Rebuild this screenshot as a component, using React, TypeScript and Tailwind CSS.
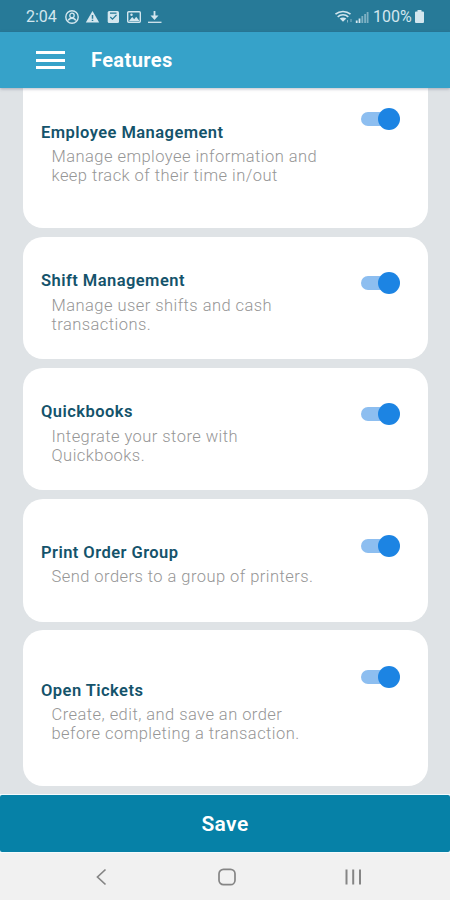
const features = [
  {
    title: "Employee Management",
    lines: ["Manage employee information and", "keep track of their time in/out"],
    card: "h-[140px] rounded-b-[20px] pt-[35px]",
    text: "mt-[5px]",
    toggle: "mt-[-15px]",
  },
  {
    title: "Shift Management",
    lines: ["Manage user shifts and cash", "transactions."],
    card: "mt-[9px] h-[122px] rounded-[20px] pt-[34px]",
    text: "mt-[6px]",
    toggle: "mt-px",
  },
  {
    title: "Quickbooks",
    lines: ["Integrate your store with", "Quickbooks."],
    card: "mt-[9px] h-[122px] rounded-[20px] pt-[34px]",
    text: "mt-[6px]",
    toggle: "mt-px",
  },
  {
    title: "Print Order Group",
    lines: ["Send orders to a group of printers."],
    card: "mt-[9px] h-[123px] rounded-[20px] pt-[44px]",
    text: "mt-[5px]",
    toggle: "mt-[-8.5px]",
  },
  {
    title: "Open Tickets",
    lines: ["Create, edit, and save an order", "before completing a transaction."],
    card: "mt-[8px] h-[156px] rounded-[20px] pt-[51px]",
    text: "mt-[5px]",
    toggle: "mt-[-15.5px]",
  },
];

function StatusBar() {
  return (
    <div className="flex h-8 shrink-0 items-center bg-[#277a98] pt-px text-[#d3e6ee]">
      <span className="ml-[26px] w-[38px] text-[16px] leading-none">2:04</span>
      <svg width="100" height="16" viewBox="0 0 100 16" fill="none">
        <circle cx="8" cy="8" r="6.2" stroke="currentColor" strokeWidth="1.4" />
        <circle cx="8" cy="6.4" r="2.2" stroke="currentColor" strokeWidth="1.3" />
        <path d="M4.3 11.5c1-3 6.4-3 7.4 0" stroke="currentColor" strokeWidth="1.4" />
        <path d="M28.5 2 35.2 13.5H21.8Z" fill="currentColor" />
        <path d="M28.5 6v3.7M28.5 10.7v1.4" stroke="#277a98" strokeWidth="1.5" />
        <rect x="43.7" y="2" width="11.3" height="12" rx="1.5" fill="currentColor" />
        <path d="m46.3 8 2.2 2.2 4-4.2M46 4.2h6.5" stroke="#277a98" strokeWidth="1.2" />
        <rect x="63.7" y="2.7" width="12.6" height="10.6" rx="1" stroke="currentColor" strokeWidth="1.4" />
        <path d="m65 12 3.2-4 2 2.3 2-2.5L75.5 12Z" fill="currentColor" />
        <circle cx="67.5" cy="5.8" r="1.2" fill="currentColor" />
        <path d="M90.5 2v7" stroke="currentColor" strokeWidth="1.8" />
        <path d="M86.5 6.5h8l-4 4.5Z" fill="currentColor" />
        <path d="M84 13.3h13.5" stroke="currentColor" strokeWidth="1.3" />
      </svg>
      <svg className="ml-auto" width="36" height="16" viewBox="0 0 36 16" fill="none">
        <path d="M.5 5.200c4.200-3.700 10.800-3.700 15 0" stroke="currentColor" strokeWidth="1.6" />
        <path d="M2.700 7.800c3-2.700 7.600-2.700 10.600 0" stroke="currentColor" strokeWidth="1.6" />
        <path d="M8 12.800 4.700 9.600c1.900-1.600 4.700-1.600 6.600 0Z" fill="currentColor" />
        <path d="M12.500 11v2.500M16 10v3" stroke="currentColor" strokeOpacity=".55" />
        <path d="M21.700 11.500V14M24.500 9.500V14" stroke="currentColor" strokeWidth="1.800" />
        <path d="M27.300 7v7M30.100 5v9M32.600 3v11" stroke="currentColor" strokeOpacity=".5" strokeWidth="1.800" />
      </svg>
      <span className="ml-[2px] w-[42px] text-[16px] leading-none">100%</span>
      <svg className="mr-[26px]" width="9" height="13" viewBox="0 0 9 13" fill="currentColor">
        <path d="M2.5 0h4v1.5H8q1 0 1 1V12q0 1-1 1H1q-1 0-1-1V2.5q0-1 1-1h1.5Z" />
      </svg>
    </div>
  );
}

function Toggle({ className }: { className: string }) {
  return (
    <div className={`flex h-[22px] w-[39px] shrink-0 items-center ${className}`}>
      <div className="h-[14px] w-[28px] rounded-full bg-[#8dbef0]" />
      <div className="-ml-[11px] size-[22px] shrink-0 rounded-full bg-[#1c84e3]" />
    </div>
  );
}

export default function App() {
  return (
    <div className="flex h-[900px] w-[450px] flex-col overflow-hidden bg-[#dfe3e6] font-['Roboto',sans-serif]">
      <StatusBar />
      <header className="z-10 flex h-14 shrink-0 items-center bg-[#36a2c9] shadow-[0_1px_3px_rgba(60,60,90,0.35)]">
        <div className="ml-9 flex w-[29px] flex-col gap-[4.5px]">
          <span className="h-[3px] bg-white" />
          <span className="h-[3px] bg-white" />
          <span className="h-[3px] bg-white" />
        </div>
        <h1 className="ml-[26px] text-[20px] leading-none font-bold tracking-[0.4px] text-white">Features</h1>
      </header>

      <main className="h-[706px] shrink-0 pr-[22px] pl-[23px]">
        {features.map((f) => (
          <section key={f.title} className={`flex justify-between bg-white pr-[28px] pl-[18px] ${f.card}`}>
            <div className="whitespace-nowrap">
              <h2 className="text-[16.5px] leading-[19px] font-semibold tracking-[0.45px] text-[#14536b]">{f.title}</h2>
              <p className={`ml-[10.5px] text-[16.5px] leading-[19px] font-light tracking-[0.45px] text-[#969696] ${f.text}`}>
                {f.lines.map((line) => (
                  <span key={line} className="block">
                    {line}
                  </span>
                ))}
              </p>
            </div>
            <Toggle className={f.toggle} />
          </section>
        ))}
      </main>

      <div className="h-[59px] shrink-0 border-t border-b-2 border-[#f4fbfd] bg-[#f4fbfd]">
        <button className="h-[57px] w-full rounded-[2px] bg-[#0681a7] pt-[2px] text-[21px] font-semibold tracking-[0.4px] text-white">
          Save
        </button>
      </div>
      <nav className="flex flex-1 items-center bg-[#f1f1f1]">
        <svg className="ml-[94px]" width="14" height="18" viewBox="0 0 14 18" fill="none" stroke="#858585" strokeWidth="1.7">
          <path d="M11.5 1.5 3.5 9l8 7.5" />
        </svg>
        <svg className="ml-[110px]" width="18" height="18" viewBox="0 0 18 18" fill="none" stroke="#858585" strokeWidth="1.7">
          <rect x="1" y="1.3" width="16" height="15.4" rx="4.5" />
        </svg>
        <svg className="ml-[108px]" width="18" height="18" viewBox="0 0 18 18" fill="none" stroke="#858585" strokeWidth="2">
          <path d="M2.5 1.5v15M9.2 1.5v15M16 1.5v15" />
        </svg>
      </nav>
    </div>
  );
}
